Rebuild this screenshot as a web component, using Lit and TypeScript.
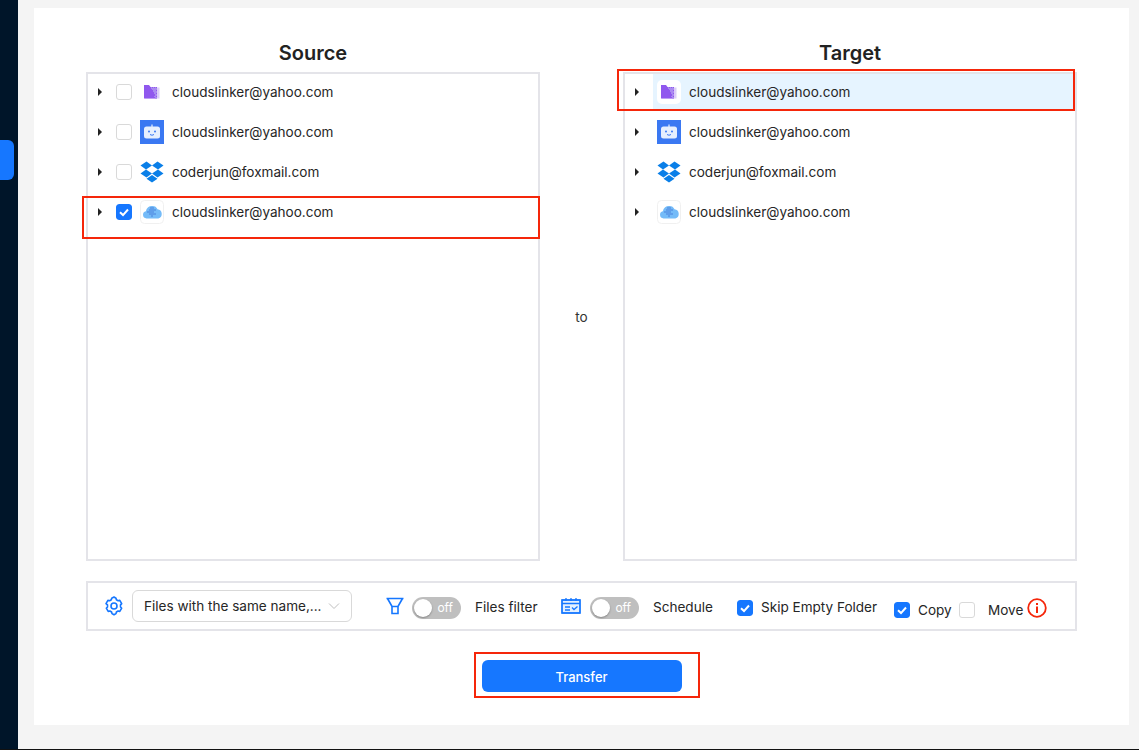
import { LitElement, html, css, svg } from "lit";
import { customElement } from "lit/decorators.js";

const folder = html`<svg width="24" height="24" viewBox="0 0 24 24"><path d="M5 6h4l1.500 1.500H19.500V18.500H5z" fill="#dccdf8"/><path d="M4 5h5l1.500 2H17v11.500H4z" fill="#9058ee"/><path d="M11 7h1v1h1V7h1v1h1V7h1v1h1v2h-1v1h1v2h-1v1h1v2h-1v1h1v1.500h-2V17h-1v-1h1v-2h-1v-2h-1v-2h-1V9h-1z" fill="#ab8bf0"/></svg>`;
const bot = html`<svg width="24" height="24" viewBox="0 0 24 24"><rect width="24" height="24" fill="#3a78f2"/><rect x="11.300" y="4.500" width="1.400" height="2.500" fill="#cfe0fc"/><rect x="4" y="6.500" width="16" height="12" rx="2.500" fill="#e6effe"/><circle cx="9" cy="11.500" r="1" fill="#3a78f2"/><circle cx="15" cy="11.500" r="1" fill="#3a78f2"/><path d="M10 14.500q2 1.500 4 0" stroke="#3a78f2" fill="none"/></svg>`;
const dropbox = html`<svg width="24" height="24" viewBox="0 0 24 24"><path fill="#0a7fe8" d="M6.500 1.500 .5 5.500l5.500 4 6-4zM17.500 1.500 12 5.500l6 4 5.500-4zM.5 13.500l6 4 5.500-4-6-4zM18 9.500l-6 4 5.500 4 6-4zM12 15l-5.500 3.800 5.500 3.700 5.500-3.700z"/></svg>`;
const cloud = html`<svg width="24" height="24" viewBox="0 0 24 24"><rect x=".5" y=".5" width="23" height="23" rx="4" fill="#fff" stroke="#f0f0f0"/><path d="M6.500 18.500a3.700 3.700 0 0 1-.6-7.300A6 6 0 0 1 12.500 6a5.600 5.600 0 0 1 5 3.300 4.700 4.700 0 0 1 .8 9.200z" fill="#74bbf8"/><path d="M10 7h4v2h2v2h-2v2h2v2h-3v2h-2v-2H9v-2H7v-2h2V9h1z" fill="#5f9eea"/></svg>`;
const caret = html`<svg class="caret" width="6" height="8" viewBox="0 0 6 8"><path d="M1 0l4 4-4 4z" fill="#222"/></svg>`;
const tick = svg`<path d="M4 8.300l3 2.800 5-5.600" stroke="#fff" stroke-width="2" fill="none"/>`;
const checked = html`<svg class="cb" width="16" height="16" viewBox="0 0 16 16"><rect width="16" height="16" rx="3" fill="#1677ff"/>${tick}</svg>`;
const rows = [
  { icon: folder, email: "cloudslinker@yahoo.com" },
  { icon: bot, email: "cloudslinker@yahoo.com" },
  { icon: dropbox, email: "coderjun@foxmail.com" },
  { icon: cloud, email: "cloudslinker@yahoo.com" },
];

@customElement("app-root")
export class AppRoot extends LitElement {
  static styles = css`
    :host { display: block; position: relative; height: 750px; width: 1139px; overflow: hidden; background: #f4f4f4;
      font-family: Inter, "Liberation Sans", sans-serif; color: #262626; font-size: 13.55px; }
    .page { display: flex; height: 749px; border-bottom: 1px solid #111; }
    .side { width: 18px; background: #001529; flex: none; position: relative; }
    .tab { position: absolute; left: 0; top: 140px; width: 14px; height: 40px; background: #1677ff; border-radius: 0 6px 6px 0; }
    .card { position: relative; margin: 8px 0 24px 16px; width: 1095px; height: 717px; background: #fff; padding: 32px 52px 0; box-sizing: border-box; }
    .cols { display: grid; grid-template-columns: 454px 83px 454px; }
    .col { display: flex; flex-direction: column; }
    h2 { margin: 0; height: 32px; line-height: 26px; text-align: center; font-size: 20px; font-weight: 600; color: #222; }
    .panel { height: 489px; border: 2px solid #e4e4e9; box-sizing: border-box; padding: 0 0 0 3px; }
    .to { display: flex; align-items: center; justify-content: center; padding-top: 32px; color: #333; }
    .row { display: flex; align-items: center; height: 36px; margin-bottom: 4px; padding-left: 6px; }
    .caret { flex: none; margin-right: 13px; }
    .cb { flex: none; width: 16px; height: 16px; box-sizing: border-box; border: 1px solid #d9d9d9; border-radius: 3px; background: #fff; }
    svg.cb { border: 0; }
    .row .cb { margin-right: 8px; }
    .ico { flex: none; width: 24px; height: 24px; margin-right: 8px; display: flex; }
    .tgt .panel { padding-left: 0; }
    .tgt .row { padding-left: 9px; }
    .tgt .caret { margin-right: 17px; }
    .sel { background: linear-gradient(90deg, #fff 0, #fff 28px, #e6f4ff 28px); }
    .sel .ico { background: #fff; border-radius: 5px; }
    .bar { margin-top: 20px; height: 50px; border: 2px solid #e4e4e9; box-sizing: border-box; display: flex; align-items: center; padding-left: 16px; white-space: nowrap; }
    .gear { flex: none; margin-right: 8px; }
    .select { flex: none; display: flex; align-items: center; justify-content: space-between; box-sizing: border-box; width: 220px; height: 32px; border: 1px solid #d9d9d9; border-radius: 6px; padding: 0 11px; margin-right: 34px; }
    .switch { flex: none; position: relative; margin-top: 4px; width: 49px; height: 22px; border-radius: 11px; background: #bfbfbf; color: #fff; font-size: 12px; line-height: 22px; text-align: right; padding-right: 8px; box-sizing: border-box; }
    .knob { position: absolute; left: 2px; top: 2px; width: 18px; height: 18px; border-radius: 50%; background: #fff; box-shadow: 0 1px 2px rgba(0,0,0,.3); }
    .funnel { flex: none; margin-right: 8px; }
    .t1 { width: 63px; margin: 2px 23px 0 14px; }
    .cal { flex: none; margin-right: 9px; }
    .t2 { width: 60px; margin: 2px 24px 0 14px; }
    .mv { display: flex; align-items: center; }
    .mv.low { margin-top: 8px; }
    .mv .cb { margin-right: 8px; }
    .skip { margin: 2px 16px 0 0; }
    .skip .cb { margin-top: 2px; }
    .lb-skip { width: 117px; }
    .copy { margin-right: 8px; }
    .lb-copy { width: 33px; }
    .move .cb { margin-right: 13px; }
    .lb-move { width: 31px; }
    .info { flex: none; margin-left: 8px; margin-top: 3px; }
    .foot { display: flex; justify-content: center; margin-top: 29px; }
    button { width: 200px; height: 32px; padding: 2px 0 0; border: 0; border-radius: 6px; background: #1677ff; color: #fff; font: 500 13px Inter, "Liberation Sans", sans-serif; }
    .red { position: absolute; border: 2px solid #f5260a; box-sizing: border-box; pointer-events: none; }
    .r1 { left: 82px; top: 196px; width: 458px; height: 43px; }
    .r2 { left: 617px; top: 69px; width: 458px; height: 42px; }
    .r3 { left: 474px; top: 652px; width: 226px; height: 46px; }
  `;

  renderRows(withBox: boolean) {
    return rows.map((r, i) => html`<div class="row ${!withBox && i === 0 ? "sel" : ""}">
      ${caret}
      ${withBox ? (i === 3 ? checked : html`<span class="cb"></span>`) : ""}
      <span class="ico">${r.icon}</span>
      <span>${r.email}</span>
    </div>`);
  }

  render() {
    return html`<div class="page">
      <div class="side"><div class="tab"></div></div>
      <div class="card">
        <div class="cols">
          <div class="col"><h2>Source</h2><div class="panel">${this.renderRows(true)}</div></div>
          <div class="to">to</div>
          <div class="col tgt"><h2>Target</h2><div class="panel">${this.renderRows(false)}</div></div>
        </div>
        <div class="bar">
          <svg class="gear" width="20" height="20" viewBox="0 0 20 20" fill="none" stroke="#1677ff" stroke-width="1.600"><path d="M10 1l2 1.200 .4 1.600 1.700 1 1.700-.4 1.900 3.200-1.200 1.300v2l1.200 1.300-1.900 3.200-1.700-.4-1.700 1-.4 1.600-2 1.200-2-1.200-.4-1.600-1.700-1-1.700.4-1.900-3.200 1.200-1.300v-2L2 7.600l1.900-3.200 1.700.4 1.700-1 .4-1.600z" stroke-linejoin="round"/><circle cx="10" cy="10" r="3"/></svg>
          <div class="select"><span>Files with the same name,...</span><svg width="12" height="8" viewBox="0 0 12 8"><path d="M1 1.500l5 5 5-5" stroke="#bfbfbf" fill="none"/></svg></div>
          <svg class="funnel" width="18" height="18" viewBox="0 0 18 18" fill="none" stroke="#1677ff" stroke-width="1.600"><path d="M.5 1.500h17M1.500 1.500l4.500 8h6l4.500-8M6 9.500h6v7H6z"/></svg>
          <div class="switch">off<div class="knob"></div></div>
          <span class="t1">Files filter</span>
          <svg class="cal" width="20" height="18" viewBox="0 0 20 18" fill="none" stroke="#1677ff" stroke-width="1.300"><rect x="1" y="3" width="18" height="13" fill="#e3f0ff"/><path d="M1 3h18v13H1zM1 6.500h18M5 1v3M10 1v3M15 1v3M4 10h5M4 13h5"/><path d="M11 10.500l2 2 3.500-3"/></svg>
          <div class="switch">off<div class="knob"></div></div>
          <span class="t2">Schedule</span>
          <div class="mv skip">${checked}<span class="lb-skip">Skip Empty Folder</span></div>
          <div class="mv low copy">${checked}<span class="lb-copy">Copy</span></div>
          <div class="mv low move"><span class="cb"></span><span class="lb-move">Move</span></div>
          <svg class="info" width="20" height="20" viewBox="0 0 20 20"><circle cx="10" cy="10" r="8.800" fill="none" stroke="#f5260a" stroke-width="1.800"/><rect x="9" y="8.500" width="2" height="6.500" fill="#f5260a"/><rect x="9" y="5" width="2" height="2" fill="#f5260a"/></svg>
        </div>
        <div class="foot"><button>Transfer</button></div>
      </div>
      <div class="red r1"></div>
      <div class="red r2"></div>
      <div class="red r3"></div>
    </div>`;
  }
}
